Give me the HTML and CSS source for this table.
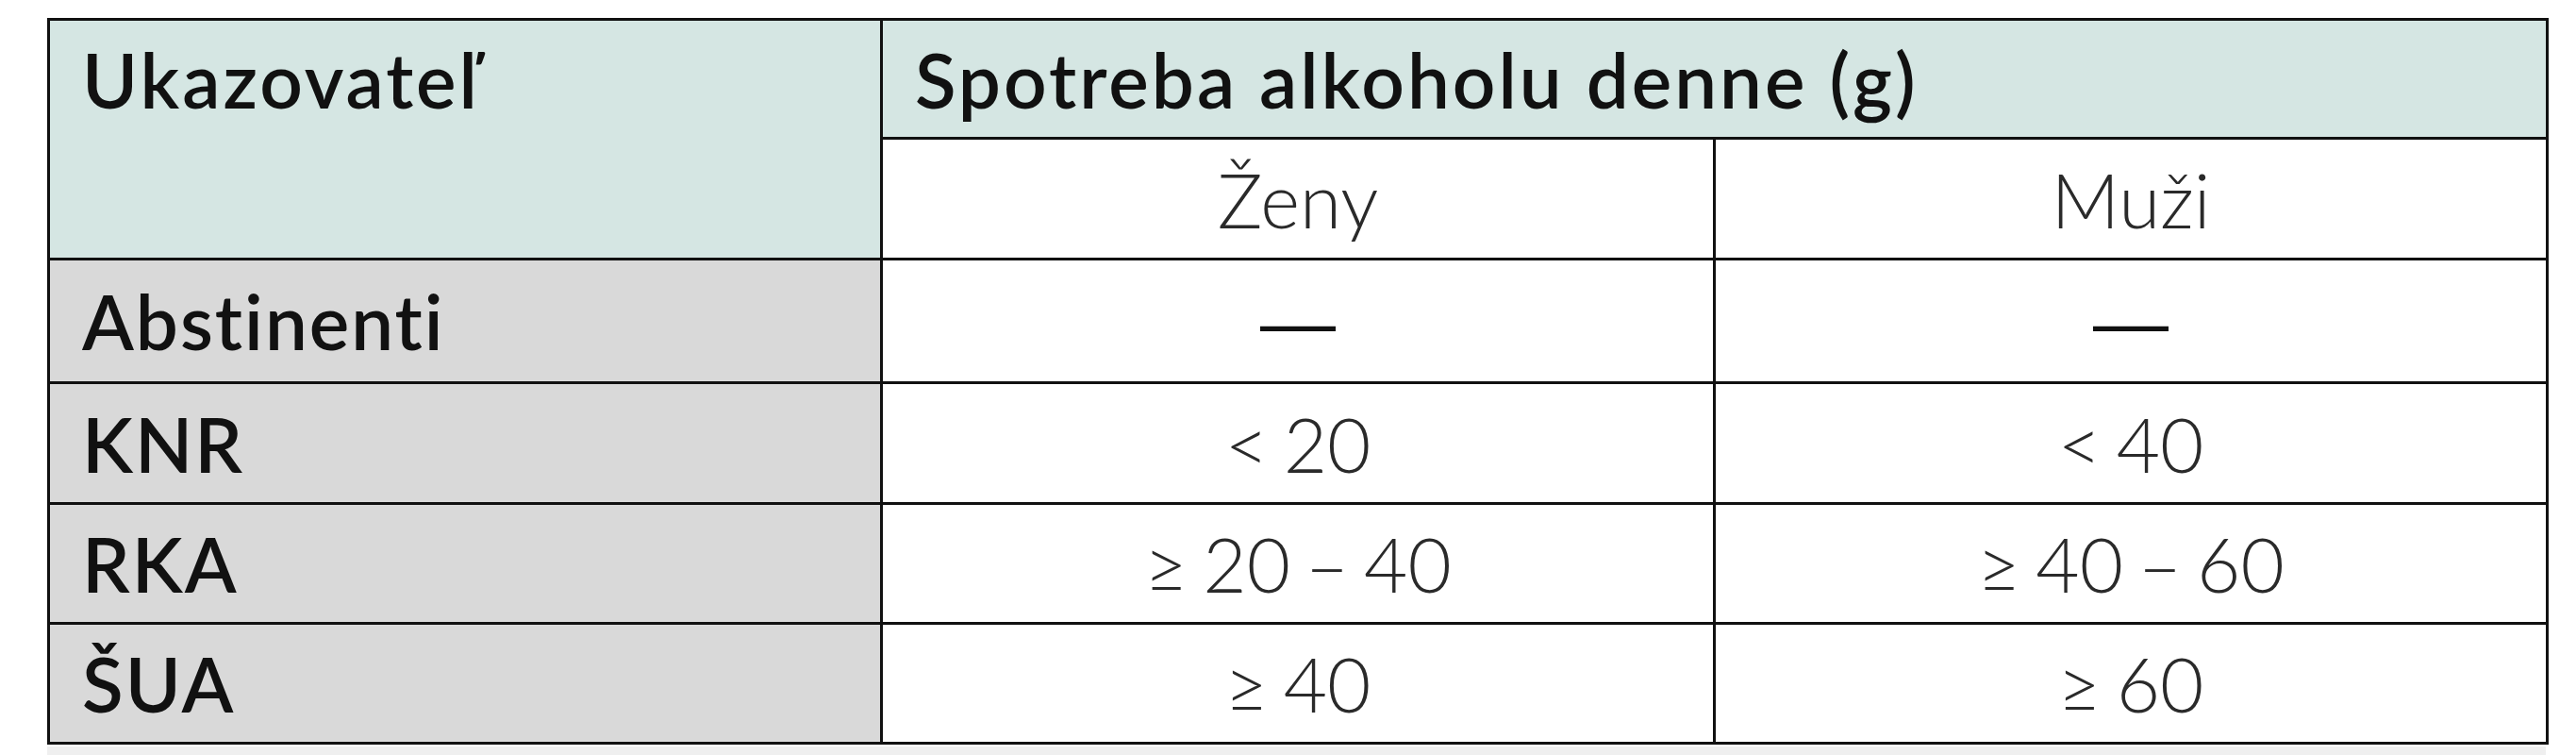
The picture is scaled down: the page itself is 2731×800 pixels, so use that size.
FILE: index.html
```html
<!DOCTYPE html>
<html lang="sk">
<head>
<meta charset="utf-8">
<title>Spotreba alkoholu</title>
<link rel="stylesheet" href="styles.css">
</head>
<body>
<div class="page">
  <table class="grid">
    <colgroup>
      <col class="col">
      <col class="col">
      <col class="col">
    </colgroup>
    <thead>
      <tr class="row-h1">
        <th class="head label" rowspan="2">Ukazovateľ</th>
        <th class="head span" colspan="2">Spotreba alkoholu denne (g)</th>
      </tr>
      <tr class="row-h2">
        <th class="sub">Ženy</th>
        <th class="sub">Muži</th>
      </tr>
    </thead>
    <tbody>
      <tr class="row-a">
        <th class="name">Abstinenti</th>
        <td class="val"><span class="dash">—</span></td>
        <td class="val"><span class="dash">—</span></td>
      </tr>
      <tr class="row-b">
        <th class="name">KNR</th>
        <td class="val">&lt; 20</td>
        <td class="val">&lt; 40</td>
      </tr>
      <tr class="row-c">
        <th class="name">RKA</th>
        <td class="val">≥ 20 – 40</td>
        <td class="val">≥ 40 – 60</td>
      </tr>
      <tr class="row-c">
        <th class="name">ŠUA</th>
        <td class="val">≥ 40</td>
        <td class="val">≥ 60</td>
      </tr>
    </tbody>
  </table>
  <div class="strip"></div>
</div>
</body>
</html>
```
FILE: styles.css
```css
html, body {
  margin: 0;
  padding: 0;
  background: #ffffff;
}

.page {
  padding: 19px 0 0 50px;
  width: 2649px;
}

.grid {
  border-collapse: collapse;
  table-layout: fixed;
  width: 2649px;
  font-family: Lato, "Open Sans", "Noto Sans", sans-serif;
  font-size: 80px;
  line-height: 1;
}

.col {
  width: 883px;
}

.grid th,
.grid td {
  border: 3px solid #111111;
  padding: 0 0 0 34px;
  margin: 0;
}

.row-h1 { height: 126px; }
.row-h2 { height: 128px; }
.row-a { height: 131px; }
.row-b { height: 128px; }
.row-c { height: 127px; }

.grid .head {
  background: #d5e6e3;
  color: #111111;
  font-weight: 600;
  letter-spacing: 3px;
  text-align: left;
  vertical-align: middle;
}

.grid .label {
  vertical-align: top;
  padding-top: 22px;
}

.grid .sub,
.grid .val {
  background: #ffffff;
  color: #2a2a2a;
  font-weight: 300;
  text-align: center;
  vertical-align: middle;
  padding: 0;
}

.grid .val {
  word-spacing: -6px;
}

.dash {
  font-family: "Liberation Sans", Arial, sans-serif;
  font-weight: 400;
  color: #111111;
}

.grid .name {
  background: #d9d9d9;
  color: #111111;
  font-weight: 600;
  letter-spacing: 2px;
  text-align: left;
  vertical-align: middle;
}

.strip {
  height: 14px;
  margin-top: 2px;
  background: #efefef;
}
```
